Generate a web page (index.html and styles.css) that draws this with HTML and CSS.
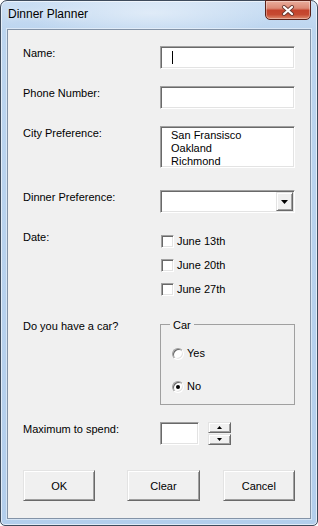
FILE: index.html
```html
<!DOCTYPE html>
<html lang="en">
<head>
  <meta charset="UTF-8">
  <meta name="viewport" content="width=device-width, initial-scale=1.0">
  <title>Dinner Planner</title>
  <link rel="stylesheet" href="styles.css">
</head>
<body>

  <div class="window">
    <div class="titlebar">
      <span class="title">Dinner Planner</span>
      <div class="close-btn">
        <svg width="14" height="11" viewBox="0 0 14 11">
          <path d="M3 2L11 9M11 2L3 9" stroke="#6b3b33" stroke-width="4" stroke-linecap="round"/>
          <path d="M3 2L11 9M11 2L3 9" stroke="#fff" stroke-width="2.2" stroke-linecap="round"/>
        </svg>
      </div>
    </div>

    <div class="client">
      <div class="row">
        <label class="label">Name:</label>
        <div class="textbox"><span class="caret"></span></div>
      </div>

      <div class="row row-phone">
        <label class="label">Phone Number:</label>
        <div class="textbox"></div>
      </div>

      <div class="row row-city">
        <label class="label">City Preference:</label>
        <div class="textbox listbox">
          <div>San Fransisco</div>
          <div>Oakland</div>
          <div>Richmond</div>
        </div>
      </div>

      <div class="row row-dinner">
        <label class="label">Dinner Preference:</label>
        <div class="textbox combo">
          <div class="arrow-btn">
            <svg width="7" height="4" viewBox="0 0 7 4"><path d="M0 0H7L3.5 4Z" fill="#000"/></svg>
          </div>
        </div>
      </div>

      <div class="row row-date">
        <label class="label">Date:</label>
        <div class="checks">
          <div class="check"><span class="checkbox"></span>June 13th</div>
          <div class="check"><span class="checkbox"></span>June 20th</div>
          <div class="check"><span class="checkbox"></span>June 27th</div>
        </div>
      </div>

      <div class="row row-car">
        <label class="label label-car">Do you have a car?</label>
        <fieldset class="car-box">
          <legend>Car</legend>
          <div class="option"><span class="radio"></span>Yes</div>
          <div class="option"><span class="radio checked"><span class="dot"></span></span>No</div>
        </fieldset>
      </div>

      <div class="row row-max">
        <label class="label">Maximum to spend:</label>
        <div class="textbox spin-box"></div>
        <div class="spin">
          <div class="spin-btn">
            <svg width="5" height="3" viewBox="0 0 5 3"><path d="M0 3H5L2.5 0Z" fill="#000"/></svg>
          </div>
          <div class="spin-btn">
            <svg width="5" height="3" viewBox="0 0 5 3"><path d="M0 0H5L2.5 3Z" fill="#000"/></svg>
          </div>
        </div>
      </div>

      <div class="buttons">
        <button class="btn">OK</button>
        <button class="btn btn-clear">Clear</button>
        <button class="btn btn-cancel">Cancel</button>
      </div>
    </div>
  </div>

</body>
</html>
```

FILE: styles.css
```css
* {
  margin: 0;
  padding: 0;
  box-sizing: border-box;
}

body {
  font-family: "Liberation Sans", Arial, sans-serif;
  font-size: 11px;
  line-height: 13px;
  color: #000;
  background-color: #fff;
}

/* window frame */

.window {
  width: 318px;
  height: 526px;
  display: flex;
  flex-direction: column;
  border: 1px solid #3e4b5c;
  border-radius: 7px 7px 5px 5px;
  background:
    radial-gradient(ellipse 130px 26px at 150px 12px, rgba(255, 255, 255, 0.45), transparent),
    linear-gradient(180deg, #cbdff4 0, #bcd5ef 30px, #b3ceec 100%);
  box-shadow: inset 0 0 0 1px rgba(255, 255, 255, 0.6);
}

.titlebar {
  height: 28px;
  display: flex;
  justify-content: space-between;
  align-items: flex-start;
  padding: 0 6px 0 7px;
}

.title {
  font-size: 12px;
  line-height: 15px;
  padding-top: 6px;
  text-shadow: 0 0 6px rgba(255, 255, 255, 0.9);
}

.close-btn {
  width: 46px;
  height: 20px;
  margin-top: -1px;
  display: flex;
  align-items: center;
  justify-content: center;
  border: 1px solid #5a2118;
  border-radius: 0 0 5px 5px;
  background: linear-gradient(180deg, #e9ad9c 0%, #dc8a76 40%, #c4432c 52%, #c64a31 75%, #de8a6d 100%);
  box-shadow: inset 0 0 0 1px rgba(255, 255, 255, 0.35);
}

.client {
  flex: 1;
  margin: 0 6px 6px;
  padding: 16px 15px 0;
  background-color: #f0f0f0;
  border: 1px solid #8393a7;
  box-shadow: 0 0 0 1px rgba(255, 255, 255, 0.45);
}

/* rows */

.row {
  display: flex;
  align-items: flex-start;
}

.row-phone { margin-top: 17px; }
.row-city { margin-top: 17px; }
.row-dinner { margin-top: 22px; }
.row-date { margin-top: 17px; }
.row-car { margin-top: 20px; }
.row-max { margin-top: 17px; }

.label {
  width: 137px;
  flex-shrink: 0;
  padding-top: 1px;
}

.label-car {
  padding-top: 4px;
}

/* sunken controls */

.textbox {
  width: 135px;
  height: 23px;
  background-color: #fff;
  border: 1px solid;
  border-color: #a0a0a0 #fff #fff #a0a0a0;
  box-shadow: inset 1px 1px 0 #696969, inset -1px -1px 0 #e3e3e3;
}

.caret {
  display: block;
  width: 1px;
  height: 13px;
  margin: 4px 0 0 11px;
  background-color: #000;
}

.listbox {
  height: 42px;
  padding: 2px 0 0 10px;
}

.combo {
  display: flex;
  justify-content: flex-end;
  padding: 1px;
}

.arrow-btn,
.spin-btn {
  display: flex;
  align-items: center;
  justify-content: center;
  background-color: #f0f0f0;
  border: 1px solid;
  border-color: #e3e3e3 #696969 #696969 #e3e3e3;
  box-shadow: inset 1px 1px 0 #fff, inset -1px -1px 0 #a0a0a0;
}

.arrow-btn {
  width: 17px;
  height: 100%;
}

.arrow-btn svg,
.spin-btn svg {
  display: block;
}

/* checkboxes */

.checks {
  display: flex;
  flex-direction: column;
  gap: 11px;
  padding-top: 5px;
}

.check {
  display: flex;
  align-items: center;
  gap: 3px;
  height: 13px;
  margin-left: 1px;
}

.checkbox {
  width: 13px;
  height: 13px;
  background-color: #fff;
  border: 1px solid;
  border-color: #a0a0a0 #fff #fff #a0a0a0;
  box-shadow: inset 1px 1px 0 #696969, inset -1px -1px 0 #e3e3e3;
}

/* car frame */

.car-box {
  width: 135px;
  height: 89px;
  border: 1px solid #a0a0a0;
  padding: 15px 0 0 9px;
  display: flex;
  flex-direction: column;
  gap: 20px;
}

.car-box legend {
  padding: 3px 3px 0;
}

.option {
  display: flex;
  align-items: center;
  gap: 3px;
  height: 13px;
  margin-left: 2px;
}

.radio {
  width: 12px;
  height: 12px;
  display: flex;
  align-items: center;
  justify-content: center;
  border-radius: 50%;
  background-color: #fff;
  border: 1px solid;
  border-color: #a0a0a0 #fff #fff #a0a0a0;
  box-shadow: inset 1px 1px 0 #696969, inset -1px -1px 0 #e3e3e3;
}

.dot {
  width: 4px;
  height: 4px;
  border-radius: 50%;
  background-color: #000;
}

/* spinner */

.spin-box {
  width: 39px;
}

.spin {
  width: 23px;
  height: 23px;
  margin-left: 9px;
  display: flex;
  flex-direction: column;
  gap: 1px;
}

.spin-btn {
  height: 11px;
}

/* buttons */

.buttons {
  display: flex;
  margin-top: 25px;
}

.btn {
  width: 73px;
  height: 31px;
  font-family: inherit;
  font-size: 11px;
  color: #000;
  background-color: #f0f0f0;
  border: 1px solid;
  border-color: #e3e3e3 #696969 #696969 #e3e3e3;
  box-shadow: inset 1px 1px 0 #fff, inset -1px -1px 0 #a0a0a0;
}

.btn-clear {
  margin-left: 32px;
}

.btn-cancel {
  margin-left: 23px;
}
```
